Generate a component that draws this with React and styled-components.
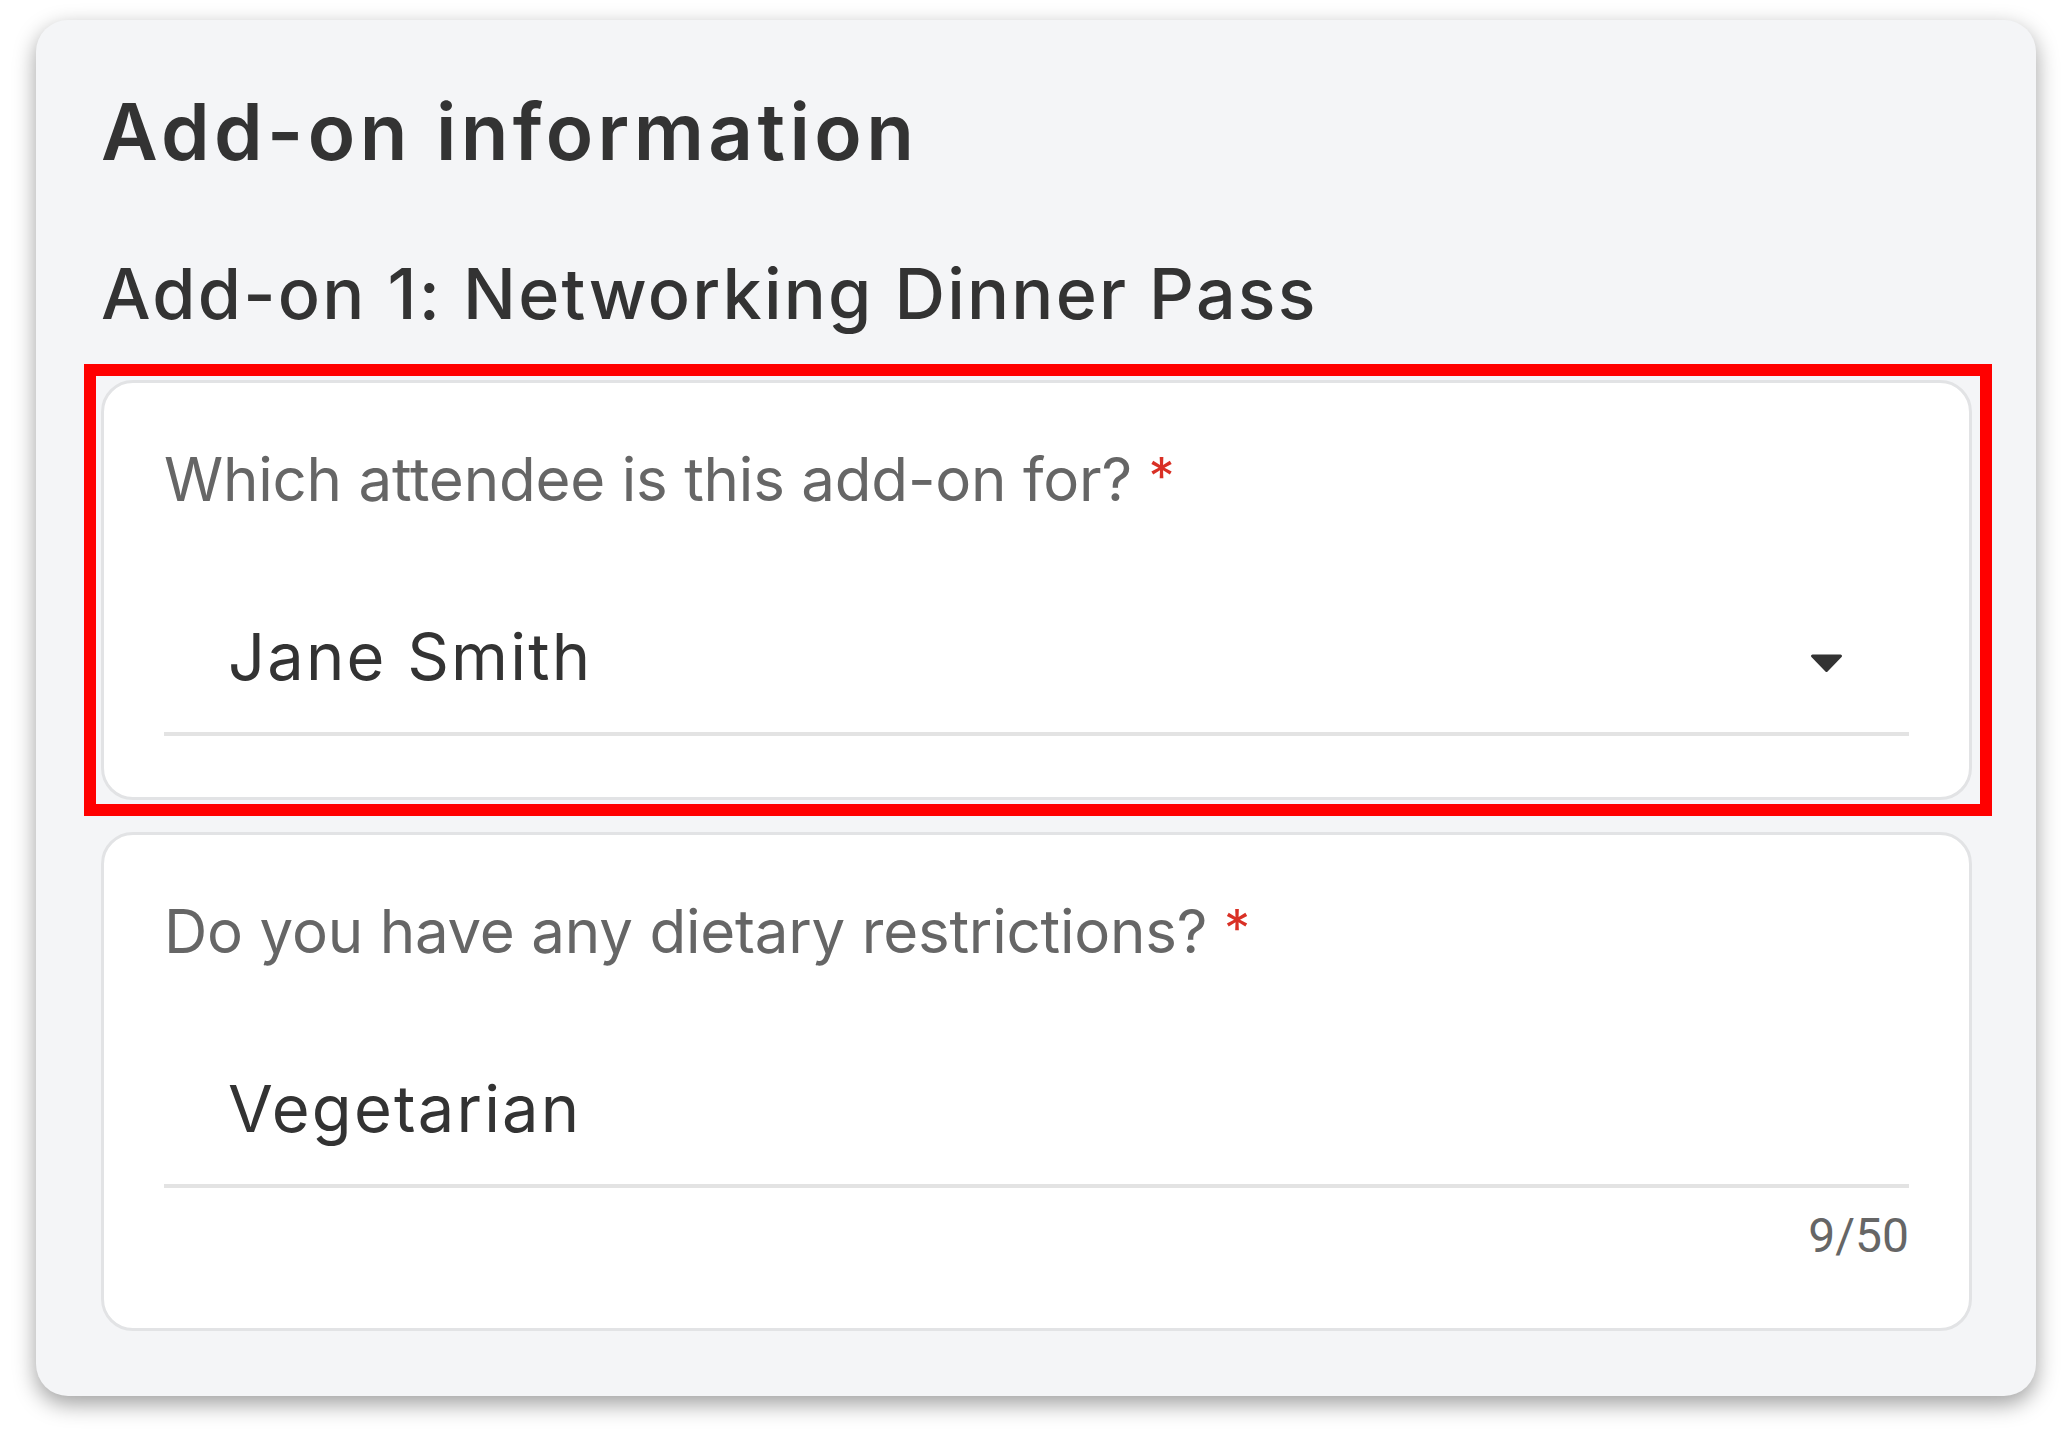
import React from 'react';
import styled, { createGlobalStyle, css } from 'styled-components';

const GlobalStyle = createGlobalStyle`
    html, body {
        margin: 0;
        padding: 0;
        background: #ffffff;
    }
    body {
        font-family: 'Inter', 'Noto Sans', sans-serif;
        -webkit-font-smoothing: antialiased;
    }
`;

const PAGE = styled.div`
    padding: 20px 0 52px 36px;
`;

const PANEL = styled.section`
    width: 2000px;
    box-sizing: border-box;
    background: #f4f5f7;
    border-radius: 32px;
    padding: 73px 64px 65px 65px;
    box-shadow: 0 8px 22px rgba(0, 0, 0, 0.38);
`;

const H1 = styled.h1`
    margin: 0;
    font-size: 78px;
    font-weight: 600;
    line-height: 1;
    letter-spacing: 4.4px;
    color: #333333;
`;

const H2 = styled.h2`
    margin: 88px 0 51px;
    font-size: 70px;
    font-weight: 500;
    line-height: 1;
    letter-spacing: 2.2px;
    color: #333333;
`;

const FIELDS = styled.div`
    display: flex;
    flex-direction: column;
    gap: 32px;
`;

const FIELDCARD = styled.div`
    position: relative;
    background: #ffffff;
    border: 3px solid #e2e3e5;
    border-radius: 32px;
    padding: 66px 60px 61px;

    ${props => props.highlighted && css`
        &::after {
            content: '';
            position: absolute;
            top: -19px;
            left: -20px;
            right: -23px;
            bottom: -19px;
            border: 12px solid #ff0000;
            pointer-events: none;
        }
    `}
`;

const LABEL = styled.div`
    font-size: 60px;
    font-weight: 400;
    line-height: 1;
    letter-spacing: -0.2px;
    color: #666666;
    white-space: nowrap;
`;

const REQUIRED = styled.span`
    color: #d93025;
    font-size: 52px;
    vertical-align: 6px;
`;

const INPUTROW = styled.div`
    display: flex;
    align-items: center;
    justify-content: space-between;
    margin-top: 115px;
    padding: 0 66px 43px 64px;
    border-bottom: 4px solid #e3e3e3;
`;

const VALUE = styled.div`
    font-size: 65px;
    line-height: 1;
    letter-spacing: 2.2px;
    color: #333333;
`;

const ARROW = styled.svg`
    display: block;
    margin-top: 14px;
`;

const COUNTER = styled.div`
    font-family: 'Roboto', 'Liberation Sans', sans-serif;
    font-size: 48px;
    line-height: 62px;
    margin-top: 17px;
    color: #666666;
    text-align: right;
`;

const DropArrow = () => (
    <ARROW width="33" height="19" viewBox="0 0 33 19">
        <polygon
            points="2.5,2 30.5,2 16.5,16.5"
            fill="#333333"
            stroke="#333333"
            strokeWidth="3"
            strokeLinejoin="round"
        />
    </ARROW>
);

const Field = ({ label, value, select, counter, highlighted }) => {
    return (
        <FIELDCARD highlighted={highlighted}>
            <LABEL>
                {label} <REQUIRED>*</REQUIRED>
            </LABEL>
            <INPUTROW>
                <VALUE>{value}</VALUE>
                {select && <DropArrow />}
            </INPUTROW>
            {counter && <COUNTER>{counter}</COUNTER>}
        </FIELDCARD>
    );
};

const App = () => {
    return (
        <PAGE>
            <GlobalStyle />
            <PANEL>
                <H1>Add-on information</H1>
                <H2>Add-on 1: Networking Dinner Pass</H2>
                <FIELDS>
                    <Field
                        highlighted
                        select
                        label="Which attendee is this add-on for?"
                        value="Jane Smith"
                    />
                    <Field
                        label="Do you have any dietary restrictions?"
                        value="Vegetarian"
                        counter="9/50"
                    />
                </FIELDS>
            </PANEL>
        </PAGE>
    );
}

export default App;
